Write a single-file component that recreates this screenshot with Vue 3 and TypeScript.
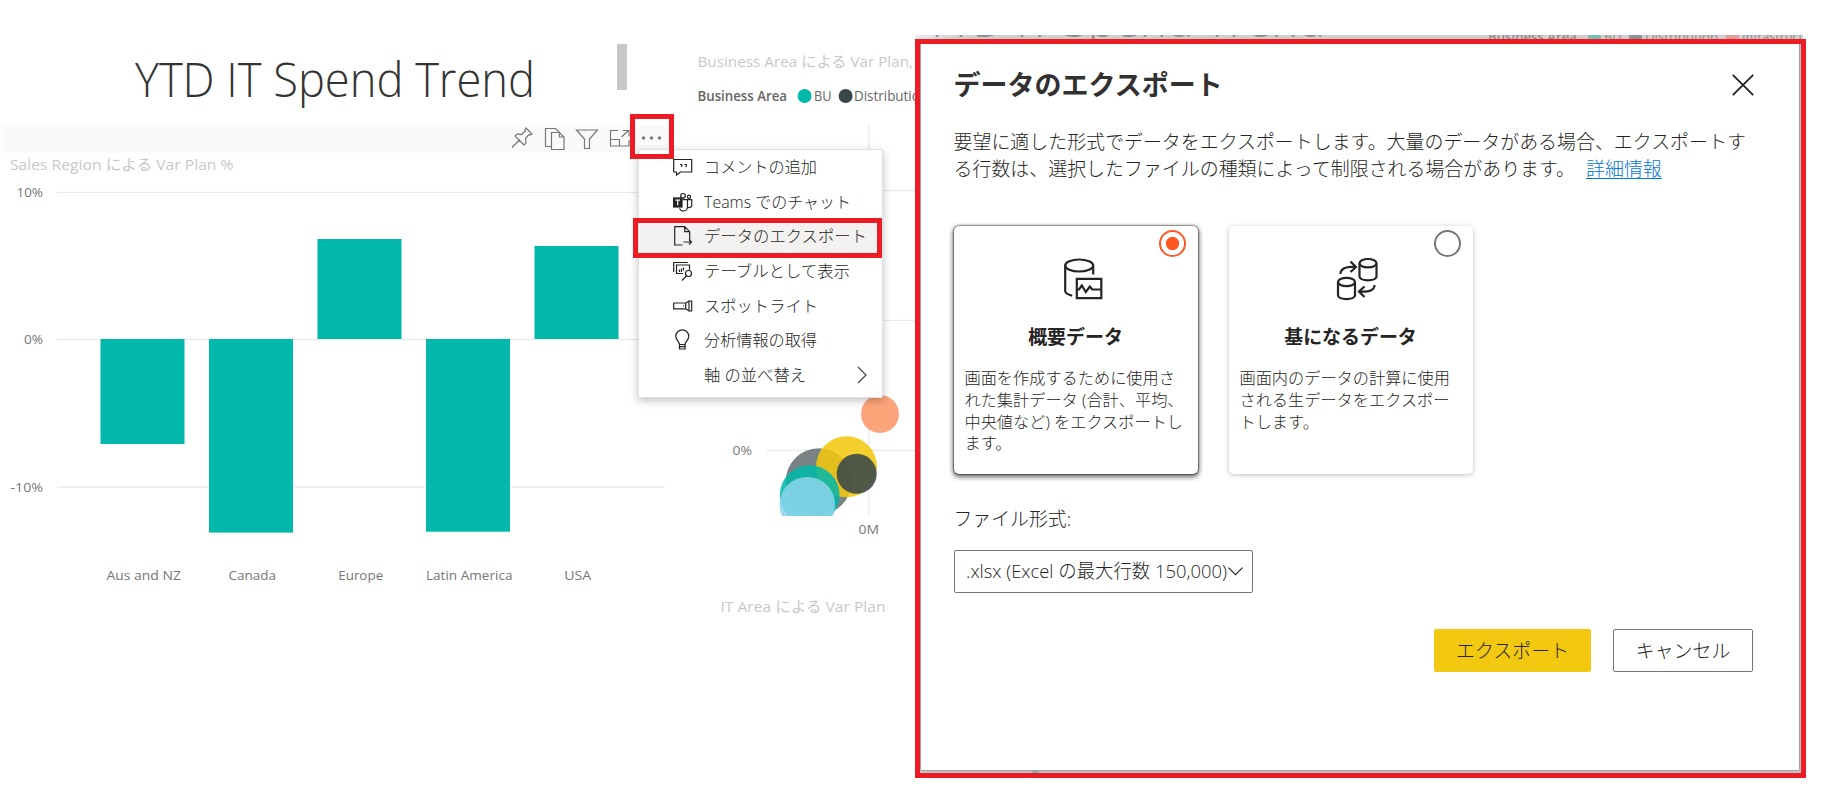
<script setup lang="ts">
interface Bar { label: string; x: number; y: number; h: number; w: number; lw: number }
interface MenuItem { label: string; icon: string; width: number; active?: boolean; sub?: boolean }
interface ExportOption { title: string; lines: string[]; icon: string; selected: boolean }

const bars: Bar[] = [
  { label: 'Aus and NZ', x: 100.5, y: 339, h: 105, w: 84, lw: 74.5 },
  { label: 'Canada', x: 209, y: 339, h: 193.6, w: 84, lw: 47.5 },
  { label: 'Europe', x: 317.5, y: 239, h: 100, w: 84, lw: 45 },
  { label: 'Latin America', x: 426, y: 339, h: 192.7, w: 84, lw: 86.5 },
  { label: 'USA', x: 534.5, y: 246, h: 93, w: 84, lw: 27 },
]

const menu: MenuItem[] = [
  { label: 'コメントの追加', icon: 'comment', width: 113 },
  { label: 'Teams でのチャット', icon: 'teams', width: 147 },
  { label: 'データのエクスポート', icon: 'export', width: 163, active: true },
  { label: 'テーブルとして表示', icon: 'table', width: 146 },
  { label: 'スポットライト', icon: 'spot', width: 114 },
  { label: '分析情報の取得', icon: 'bulb', width: 113 },
  { label: '軸 の並べ替え', icon: '', width: 102, sub: true },
]

const options: ExportOption[] = [
  {
    title: '概要データ',
    lines: ['画面を作成するために使用さ', 'れた集計データ (合計、平均、', '中央値など) をエクスポートし', 'ます。'],
    icon: 'summary',
    selected: true,
  },
  {
    title: '基になるデータ',
    lines: ['画面内のデータの計算に使用', 'される生データをエクスポー', 'トします。'],
    icon: 'underlying',
    selected: false,
  },
]
</script>

<template>
  <main class="page">
    <section class="report">
      <svg class="canvas" width="915" height="798" viewBox="0 0 915 798">
        <text class="h1" x="135" y="96.500" textLength="400" lengthAdjust="spacingAndGlyphs">YTD IT Spend Trend</text>
        <rect x="617" y="44" width="10" height="46" fill="#c8c8c8" />
        <rect x="4" y="125.5" width="666" height="27" fill="#fafafa" />
        <text class="vtitle" x="10" y="170" textLength="223.500" lengthAdjust="spacingAndGlyphs">Sales Region による Var Plan %</text>

        <g class="grid">
          <path d="M57 192.300H665M57 339.500H665M57 487H665" />
        </g>
        <text class="axis" x="43" y="197" text-anchor="end" textLength="26.500" lengthAdjust="spacingAndGlyphs">10%</text>
        <text class="axis" x="43" y="344" text-anchor="end" textLength="19" lengthAdjust="spacingAndGlyphs">0%</text>
        <text class="axis" x="43" y="492" text-anchor="end" textLength="32.500" lengthAdjust="spacingAndGlyphs">-10%</text>
        <g v-for="b in bars" :key="b.label">
          <rect :x="b.x" :y="b.y" :width="b.w" :height="b.h" fill="#01b8aa" />
          <text class="axis" :x="b.x + b.w / 2 + 1.200" y="580" text-anchor="middle" :textLength="b.lw" lengthAdjust="spacingAndGlyphs">{{ b.label }}</text>
        </g>

        <g class="tool">
          <path d="M512 147.500l8-8M526 128l6 6-1.500 1-1.500-.500-3.500 4 .5 4-2 2.500-9-9 2.500-2 4 .500 4-3.500-.500-1.500z" />
          <path d="M551.500 146.500h-6v-18h10l4 4M551.500 132.500h8l4.500 4.500v12.500h-12.500zM559.500 132.500v4.500h4.500" />
          <path d="M576.500 130h21l-8 9v9.500h-5v-9.500z" />
          <path d="M618 130.500h-7.500v15.500h18.500v-6M610.500 139.500h9v6.500M621.500 137l7-6.500M623 130.500h6v6" />
        </g>
        <g fill="#777"><circle cx="643.5" cy="138" r="1.700" /><circle cx="651.5" cy="138" r="1.700" /><circle cx="659.5" cy="138" r="1.700" /></g>

        <text class="vtitle" x="697.500" y="67" textLength="215.500" lengthAdjust="spacingAndGlyphs">Business Area による Var Plan,</text>
        <text class="legend strong" x="697.500" y="101" textLength="89.500" lengthAdjust="spacingAndGlyphs">Business Area</text>
        <circle cx="804.6" cy="96" r="7" fill="#01b8aa" />
        <text class="legend" x="814" y="101" textLength="17.500" lengthAdjust="spacingAndGlyphs">BU</text>
        <circle cx="845.6" cy="96" r="7" fill="#374649" />
        <text class="legend" x="854" y="101" textLength="74" lengthAdjust="spacingAndGlyphs">Distribution</text>
        <path class="grid" d="M868.800 124V516M766 190.500H915M766 320.300H915M766 450.300H915" />
        <text class="axis" x="752" y="455" text-anchor="end" textLength="19.500" lengthAdjust="spacingAndGlyphs">0%</text>
        <text class="axis" x="868.800" y="534" text-anchor="middle" textLength="20.500" lengthAdjust="spacingAndGlyphs">0M</text>
        <clipPath id="plot"><rect x="690" y="380" width="225" height="136" /></clipPath>
        <g clip-path="url(#plot)" fill-opacity=".87">
          <circle cx="818.7" cy="481.3" r="33" fill="#657074" />
          <circle cx="846.5" cy="466.8" r="30.500" fill="#f2c80f" />
          <circle cx="809.7" cy="495" r="29.800" fill="#01b8aa" />
          <circle cx="807.3" cy="504.7" r="27.800" fill="#8ad4eb" />
          <circle cx="856.7" cy="473.8" r="20" fill="#374649" />
          <circle cx="880" cy="414" r="19" fill="#fe9666" />
        </g>
        <text class="vtitle" x="720.500" y="612" textLength="165" lengthAdjust="spacingAndGlyphs">IT Area による Var Plan</text>
      </svg>

      <ul class="menu">
        <li v-for="m in menu" :key="m.label" :class="{ active: m.active }">
          <svg class="mi" width="20" height="22" viewBox="0 0 20 22">
            <g v-if="m.icon === 'comment'">
              <path d="M.700 3.500h18v12.500H7.500L3.500 19v-3H.700z" />
              <path d="M7 8.500h1.800v1.500l-.8 1M11.500 8.500h1.800v1.500l-.8 1" />
            </g>
            <g v-else-if="m.icon === 'teams'">
              <rect x="0" y="7" width="9" height="9" fill="#252423" />
              <path d="M2.500 9.200h4.500M4.700 9.200v5" stroke="#fff" />
              <circle cx="10" cy="4.800" r="2.300" /><circle cx="16" cy="5.700" r="1.600" />
              <path d="M9.500 8.700h5v7.800a4.200 4.200 0 0 1-8 1M14.500 8.700h4.200v5.800q0 2-3.700 2.200" />
            </g>
            <g v-else-if="m.icon === 'export'">
              <path d="M9.500 20H1.700V1.700h10l5 5v8M11.700 1.700v5h5M10.500 17h8M16 14.500l2.500 2.500-2.500 2.500" />
            </g>
            <g v-else-if="m.icon === 'table'">
              <path d="M.700 12V2.500h14M3.500 12v-7H16.500v5M3.500 5v8.500H10M6.500 9.500v2.500M8.500 8.500v3.500M10.500 7.500v3" />
              <circle cx="15.500" cy="13.500" r="3" /><path d="M13.500 16L9 20.500" />
            </g>
            <g v-else-if="m.icon === 'spot'">
              <path d="M.700 8h12v5.800h-12zM12.700 8l3.300-2v10l-3.300-2.200M16 6h2.700v10H16" />
              <path d="M10.200 10.900h1" />
            </g>
            <g v-else-if="m.icon === 'bulb'">
              <path d="M6.500 15.500c0-3-3.700-4-3.700-8.200a6.500 6.500 0 0 1 13 0c0 4.200-3.700 5.200-3.700 8.200zM6.500 15.500v4.500h5.600v-4.500M6.500 17.700h5.600" />
            </g>
          </svg>
          <svg class="ml" :width="m.width" height="24"><text x="0" y="17.500" :textLength="m.width" lengthAdjust="spacingAndGlyphs">{{ m.label }}</text></svg>
          <svg v-if="m.sub" class="more" width="10" height="18" viewBox="0 0 10 18"><path d="M1 1l8 8-8 8" /></svg>
        </li>
      </ul>
      <div class="mark mark-dots"></div>
      <div class="mark mark-item"></div>
    </section>

    <section class="side">
      <svg class="strip" width="891" height="4" viewBox="915 35 891 4">
        <defs>
          <linearGradient id="fade"><stop offset="0" stop-color="#eee" /><stop offset=".05" stop-color="#cfcfcf" /><stop offset="1" stop-color="#cfcfcf" /></linearGradient>
        </defs>
        <rect x="915" y="35" width="888" height="4" fill="url(#fade)" />
        <text class="h1 dim" x="925" y="37" textLength="400" lengthAdjust="spacingAndGlyphs">YTD IT Spend Trend</text>
        <text class="legend strong dim" x="1488" y="42" textLength="89" lengthAdjust="spacingAndGlyphs">Business Area</text>
        <circle cx="1594.500" cy="37" r="6.500" fill="#74c0b8" />
        <text class="legend dim" x="1604" y="42" textLength="17.500" lengthAdjust="spacingAndGlyphs">BU</text>
        <circle cx="1635.500" cy="37" r="6.500" fill="#8a9392" />
        <text class="legend dim" x="1645" y="42" textLength="73" lengthAdjust="spacingAndGlyphs">Distribution</text>
        <circle cx="1732.500" cy="37" r="6.500" fill="#e0a09c" />
        <text class="legend dim" x="1742" y="42" textLength="61" lengthAdjust="spacingAndGlyphs">Infrastruct</text>
      </svg>
      <div class="frame">
        <div class="dialog">
          <header>
            <h2>データのエクスポート</h2>
            <svg width="22" height="22" viewBox="0 0 22 22"><path d="M.800.800l20.400 20.400M21.200.800L.800 21.200" /></svg>
          </header>
          <p class="intro">要望に適した形式でデータをエクスポートします。大量のデータがある場合、エクスポートす<br>る行数は、選択したファイルの種類によって制限される場合があります。<a>詳細情報</a></p>
          <div class="cards">
            <article v-for="o in options" :key="o.title" :class="{ selected: o.selected }">
              <i class="radio"></i>
              <svg v-if="o.icon === 'summary'" class="big" width="48" height="44" viewBox="0 0 48 44">
                <ellipse cx="20.200" cy="8.500" rx="14" ry="6" />
                <path d="M6.200 8.500v25.500c0 2 2.500 3.500 7 4.700M34.200 8.500v9" />
                <path d="M17.800 21.800h24.500v19.400H17.800zM18 32.500h2l2.800-4 4 6.500 4-5.500 2.500 3h9" />
              </svg>
              <svg v-else class="big" width="48" height="44" viewBox="0 0 48 44">
                <ellipse cx="34" cy="6.200" rx="8.500" ry="4.200" /><path d="M25.500 6.200v13c0 5.500 17 5.500 17 0v-13" />
                <ellipse cx="12.500" cy="25" rx="8.500" ry="4.200" /><path d="M4 25v13c0 5.500 17 5.500 17 0v-13" />
                <path d="M6.500 17c0-5 5-8 14.500-7M16.500 4.500l5.500 5.500-5.500 5" />
                <path d="M40.500 28c0 5-5 7.500-14.500 6.500M30.500 29.500l-5.500 5 5.500 5.500" />
              </svg>
              <h3>{{ o.title }}</h3>
              <p><span v-for="l in o.lines" :key="l">{{ l }}</span></p>
            </article>
          </div>
          <label class="flabel">ファイル形式:</label>
          <div class="select">
            <svg width="261" height="28"><text x="0" y="20" textLength="261" lengthAdjust="spacingAndGlyphs">.xlsx (Excel の最大行数 150,000)</text></svg>
            <svg class="chev" width="15" height="9" viewBox="0 0 15 9"><path d="M.500.700l7 7 7-7" /></svg>
          </div>
          <footer>
            <button class="primary">エクスポート</button>
            <button>キャンセル</button>
          </footer>
        </div>
        <i class="speck"></i>
      </div>
    </section>
  </main>
</template>

<style>
body { margin: 0; background: #fff; }
</style>

<style scoped>
* { box-sizing: border-box; }
.page {
  display: flex;
  width: 1826px;
  height: 798px;
  overflow: hidden;
  background: #fff;
  color: #252423;
  font-family: "Open Sans", "Noto Sans CJK JP", sans-serif;
}
.report { position: relative; width: 915px; height: 798px; }
svg { display: block; flex: none; }
.h1 { font-size: 48px; font-weight: 300; fill: #333; }
.vtitle { font-size: 15px; fill: #c8c8c8; font-weight: 400; }
.axis { font-size: 13.500px; fill: #777; }
.legend { font-size: 14px; fill: #666; }
.strong { font-weight: 600; fill: #666; }
.grid { stroke: #eaeaea; stroke-width: 1.300; fill: none; }
.tool { fill: none; stroke: #777; stroke-width: 1.200; }

.menu {
  position: absolute;
  left: 638px;
  top: 149px;
  width: 245px;
  height: 249px;
  margin: 0;
  padding: 0;
  list-style: none;
  background: #fff;
  border: 1px solid #e1e1e1;
  border-radius: 2px;
  box-shadow: 0 3px 8px rgba(0, 0, 0, .24);
}
.menu li { display: flex; align-items: center; height: 34.600px; padding-left: 34px; }
.menu li.active { background: #f3f2f1; }
.mi { margin-right: 11px; fill: none; stroke: #252423; stroke-width: 1.200; }
.ml { font-size: 16px; font-weight: 300; fill: #252423; overflow: visible; }
.more { margin-left: 51px; fill: none; stroke: #444; stroke-width: 1.200; }
.mark { position: absolute; border: 5px solid #ed1c24; }
.mark-dots { left: 630px; top: 114px; width: 44px; height: 45px; }
.mark-item { left: 633px; top: 218px; width: 249px; height: 40px; }

.side { width: 891px; padding-top: 35px; }
text.dim { fill: #8e8e8e; }
.frame {
  position: relative;
  width: 891px;
  height: 739px;
  padding-right: 1px;
  border: 5px solid #ed1c24;
  background: #bfc3c4;
}
.speck { position: absolute; left: 112px; bottom: 0; width: 7px; height: 2px; background: #7fb0ac; transform: skewX(-45deg); }
.dialog {
  width: 880px;
  height: 727px;
  padding: 23px 46px 0 32.500px;
  background: #fff;
  border: 1px solid #a2a2a2;
  border-top: 0;
  border-radius: 0 0 2px 2px;
}
header { display: flex; justify-content: space-between; align-items: center; height: 36px; margin-right: -1px; }
header svg { fill: none; stroke: #252423; stroke-width: 1.800; }
h2 { margin: 0; font-size: 27px; line-height: 36px; font-weight: 700; color: #323130; white-space: nowrap; }
.intro { margin: 26px 0 0; font-size: 18.950px; line-height: 27px; font-weight: 300; white-space: nowrap; }
.intro a { margin-left: 11px; color: #0078d4; text-decoration: underline; text-underline-offset: 2px; }
.cards { display: flex; gap: 31px; margin-top: 43px; }
article {
  position: relative;
  width: 244px;
  height: 248px;
  padding: 31px 11px 0;
  border-radius: 5px;
  box-shadow: 0 1px 5px rgba(0, 0, 0, .26);
}
article.selected { box-shadow: 0 0 1px 1px rgba(0, 0, 0, .35), 0 2px 5px 1px rgba(0, 0, 0, .6); }
.radio { position: absolute; right: 12px; top: 4px; width: 27px; height: 27px; border: 2px solid #767676; border-radius: 50%; }
.selected .radio { border-color: #ff5722; background: radial-gradient(circle, #ff5722 6.300px, #fff 7px); }
.big { margin-left: 94px; fill: none; stroke: #252423; stroke-width: 2.200; }
h3 { margin: 22px 0 0; font-size: 18.950px; line-height: 28px; font-weight: 700; text-align: center; white-space: nowrap; }
article p { margin: 17px 0 0; font-size: 16.200px; line-height: 21.800px; font-weight: 300; white-space: nowrap; }
article p span { display: block; }
.flabel { display: block; margin-top: 32px; font-size: 18.860px; line-height: 27px; font-weight: 300; }
.select {
  display: flex;
  align-items: center;
  width: 299px;
  height: 43px;
  margin-top: 17px;
  padding-left: 11px;
  border: 1px solid #767676;
  border-radius: 2px;
  font-size: 18.860px;
  font-weight: 300;
}
.select text { fill: #252423; }
.chev { margin-left: 1px; fill: none; stroke: #252423; stroke-width: 1.200; }
footer { display: flex; justify-content: flex-end; gap: 22px; margin-top: 36px; }
button {
  width: 140px;
  height: 43px;
  padding: 0 0 2px;
  border: 1px solid #767676;
  border-radius: 2px;
  background: #fff;
  color: #252423;
  font: 300 18.950px "Open Sans", "Noto Sans CJK JP", sans-serif;
  white-space: nowrap;
}
button.primary { width: 157px; border-color: #f2c811; background: #f2c811; }
</style>
